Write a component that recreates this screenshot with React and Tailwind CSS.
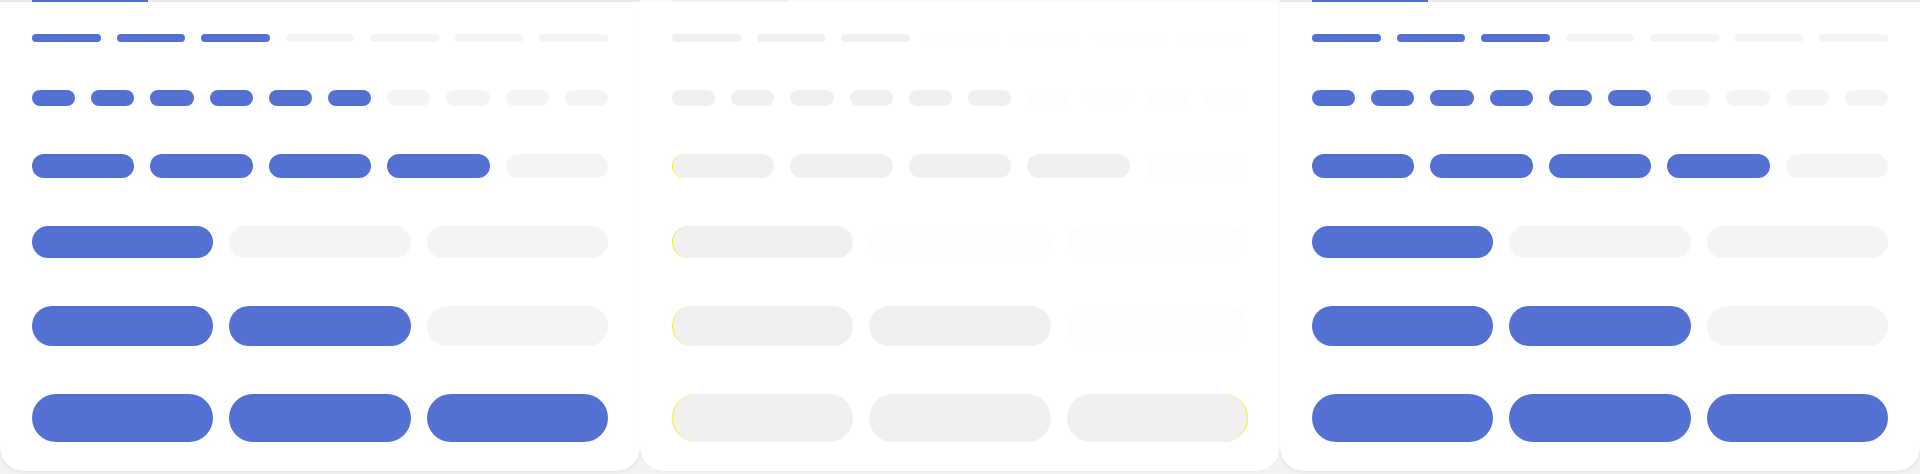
import React from 'react'

// Each row: how many segments, how many are filled, and the segment shape
const ROWS = [
  { count: 7, filled: 3, cols: 'grid-cols-7', bar: 'h-2 rounded-full' },
  { count: 10, filled: 6, cols: 'grid-cols-10', bar: 'h-4 rounded-full' },
  { count: 5, filled: 4, cols: 'grid-cols-5', bar: 'h-6 rounded-full' },
  { count: 3, filled: 1, cols: 'grid-cols-3', bar: 'h-8 rounded-full' },
  { count: 3, filled: 2, cols: 'grid-cols-3', bar: 'h-10 rounded-full' },
  { count: 3, filled: 3, cols: 'grid-cols-3', bar: 'h-12 rounded-full' },
]

const THEMES = {
  solid: {
    card: 'bg-white shadow-[0_1px_4px_rgba(0,0,0,0.08)]',
    track: 'bg-[#ebebeb]',
    indicator: 'bg-[#5271d3]',
    on: 'bg-[#5271d3]',
    off: 'bg-[#f4f4f4]',
  },
  ghost: {
    card: 'bg-white shadow-[0_1px_3px_rgba(0,0,0,0.03)]',
    track: 'bg-[#fbfbfb]',
    indicator: 'bg-[#f0f0f0]',
    on: 'bg-[#f0f0f0]',
    off: 'bg-[#fdfdfd]',
  },
}

function SegmentRow({ row, theme, ghost }) {
  const t = THEMES[theme]
  return (
    <div className={`grid ${row.cols} gap-4`}>
      {Array.from({ length: row.count }).map((_, i) => {
        const isOn = i < row.filled
        // the faded card shows a yellow fringe on a few pill edges
        const fringeLeft = ghost && i === 0 && row.count <= 5
        const fringeRight = ghost && row.filled === row.count && row.count === 3 && i === 2
        return (
          <div
            key={i}
            className={[
              row.bar,
              isOn ? t.on : t.off,
              fringeLeft && 'border-l border-l-[#f5ee1c]',
              fringeRight && 'border-r border-r-[#f5ee1c]',
            ].filter(Boolean).join(' ')}
          />
        )
      })}
    </div>
  )
}

function Card({ theme }) {
  const t = THEMES[theme]
  const ghost = theme === 'ghost'
  return (
    <div className={`h-[471px] rounded-b-[24px] flex flex-col ${t.card}`}>
      {/* barra superior con indicador */}
      <div className={`h-[2px] w-full ${t.track}`}>
        <div className={`h-full w-[116px] ml-8 ${t.indicator}`} />
      </div>
      <div className="flex flex-col gap-12 px-8 pt-8">
        {ROWS.map((row, i) => (
          <SegmentRow key={i} row={row} theme={theme} ghost={ghost} />
        ))}
      </div>
    </div>
  )
}

export default function App() {
  return (
    <div className="w-[1920px] h-[474px] overflow-hidden bg-[#f3f3f3] grid grid-cols-3">
      <Card theme="solid" />
      <Card theme="ghost" />
      <Card theme="solid" />
    </div>
  )
}
